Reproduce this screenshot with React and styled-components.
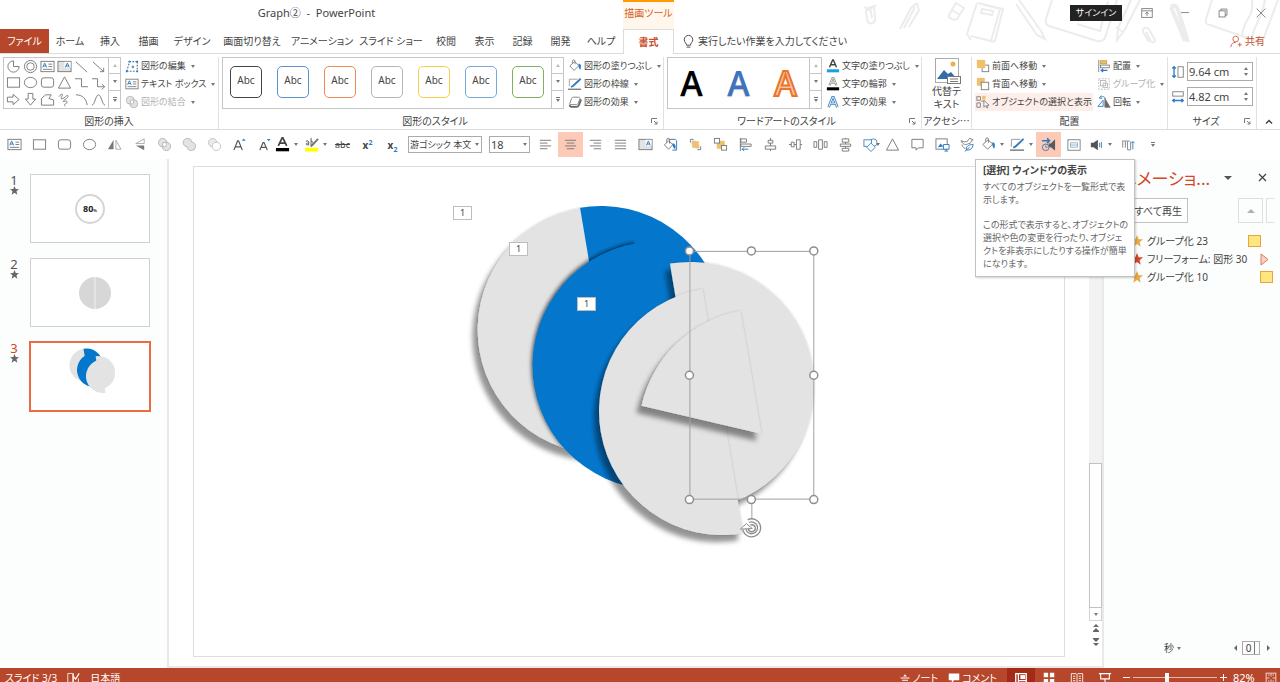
import styled, { createGlobalStyle, css } from "styled-components";

const GlobalStyle = createGlobalStyle`
    *, *::before, *::after {
        box-sizing: border-box;
    }
    body {
        margin: 0;
        color: #444;
        background: #fff;
        font-family: "Noto Sans", "Noto Sans CJK JP", sans-serif;
        font-size: 10px;
        line-height: 16px;
        font-feature-settings: "palt";
    }
    button, input, select {
        margin: 0;
        padding: 0;
        color: inherit;
        font: inherit;
        font-feature-settings: inherit;
        background: none;
        border: 0;
        border-radius: 0;
    }
`;

const gray = "#7a7a7a";
const blue = "#2f7bbf";
const amber = "#f0c06a";

const icons = {
    pie: <path d="M8 2a6 6 0 1 0 6 6H8z" />,
    donut: <><circle cx="8" cy="8" r="6.5" /><circle cx="8" cy="8" r="4" /></>,
    textBox: <><rect x="1" y="2.5" width="14" height="11" /><path d="M9 5.5h4M9 8h4M3 11h10" /><path stroke={blue} d="M3 9l1.8-4.5h.4L7 9M3.6 7.5h3" /></>,
    textBoxV: <><rect x="1" y="2.5" width="14" height="11" fill="#e3e3e3" /><rect x="8" y="3" width="6.5" height="6.500" fill="#fff" stroke="none" /><path stroke={blue} d="M9 9l1.800-4.500h.4L13 9M9.500 7.500h3" /></>,
    line: <path d="M2 3l12 11" />,
    arrow: <path d="M2 3l11.500 10.500M13.500 9.500v4h-4" />,
    rect: <rect x="1.500" y="3" width="13" height="10" />,
    oval: <ellipse cx="8" cy="8" rx="6.500" ry="5.500" />,
    round: <rect x="1.500" y="3" width="13" height="10" rx="2.500" />,
    triangle: <path d="M8 2L14.500 14h-13z" />,
    elbow: <path d="M1 4h7v8.500h7" />,
    elbowArrow: <path d="M1 4h6v8.500h7.500M11.500 9.500l3 3-3 3" />,
    arrowRight: <path d="M1.500 5.500h6V2.500L14 8l-6.500 5.500v-3h-6z" />,
    arrowDown: <path d="M5.500 1.500v6h-3L8 14l5.500-6.500h-3v-6z" />,
    freeform: <path d="M1.500 14V7L6 3h6L9.500 7l5 1.500V14z" />,
    scribble: <path d="M2 5c3-4 5-3 3 0s1 3 4 0 4 0 1 2-5 4-2 3 4 1 2 2-3 2-1 3" />,
    arc: <path d="M2 3c7 0 11 4 12 11" />,
    curve: <path d="M1 14c3 0 4-11 7-11s4 11 7 11" />,
    editShape: <><path stroke={blue} strokeDasharray="2 1.500" d="M5 3h9M14 3v11M2 14L5 4M2 14h12" strokeWidth="1.300" /><path stroke={blue} strokeWidth="2" d="M1 14h2M13 14h2M4 3h2M13 3h2" /><circle cx="9" cy="9" r="1" fill={gray} /></>,
    merge: <g fill="#e3e3e3" stroke="#b5b5b5"><circle cx="6" cy="6" r="4.500" /><circle cx="10" cy="10" r="4.500" /><ellipse cx="8" cy="8" rx="2" ry="2.500" fill="#fff" /></g>,
    union: <path fill="#e3e3e3" stroke="#b5b5b5" d="M6 1.500a4.500 4.500 0 0 1 4.500 4 4.500 4.500 0 1 1-5 5A4.500 4.500 0 0 1 6 1.500z" />,
    subtract: <g stroke="#c4c4c4"><circle cx="6" cy="6" r="4.500" fill="#eaeaea" /><circle cx="10" cy="10" r="4.500" fill="#fff" /></g>,
    bucket: <><path d="M2 8l5.500-5 5 4.500L7 13z" /><path d="M5 5V2.500a1.500 1.500 0 0 1 3 0V6" /><path d="M12 5.500c3 0 3.500 3 2 7-1.500-1.500-2-3-2-7z" fill={blue} stroke="none" /></>,
    outline: <><path d="M11 2.500H1.500v8" stroke="#999" /><path d="M0 14h15" stroke="#777" strokeWidth="1.500" /><path d="M14.500 2L6 10l-2.500 1.500" stroke={blue} strokeWidth="2" /></>,
    effects: <><path d="M2 10l2-6c.5-1 1-1.500 2-1.500h6c1.500 0 2 1 1.500 2l-2 5c-.5 1-1 1.500-2 1.500H3c-1 0-1.500-.5-1-1z" fill="#fff" /><path d="M2 11c0 2 .5 2.500 2 2.500h6c1.500 0 2-.5 2.500-2L15 5" stroke="#666" strokeWidth="2" /></>,
    letterFill: <><path d="M4 9.500L7.600 1h.8L12 9.500M5.300 6.500h5.400" stroke="#444" strokeWidth="1.600" /><path d="M1 13.500h14" stroke="#18a0e0" strokeWidth="3.500" /></>,
    letterOutline: <><path d="M4 9.500L7.600 1h.8L12 9.500M5.300 6.500h5.400" stroke="#888" strokeWidth="2.400" /><path d="M4 9.500L7.600 1h.8L12 9.500M5.300 6.500h5.400" stroke="#fff" strokeWidth=".8" /><path d="M1 13.500h14" stroke="#000" strokeWidth="3.500" /></>,
    letterEffects: <><path d="M3 14L7.500 2.500h1L13 14M5 10h6" stroke="#3c83c4" strokeWidth="3" /><path d="M3 14L7.500 2.500h1L13 14M5 10h6" stroke="#fff" strokeWidth="1" /></>,
    forward: <><rect x="7" y="7" width="7.500" height="7.500" /><rect x="1" y="1" width="9.500" height="9.500" fill={amber} stroke="none" /></>,
    backward: <><rect x="1" y="1" width="9" height="9" fill={amber} stroke="none" /><rect x="6" y="6" width="8.500" height="8.500" fill="#fff" /></>,
    selection: <><rect x="1" y="2" width="4" height="4" /><rect x="7" y="1" width="4" height="4" fill={amber} stroke="none" /><path d="M1 9h4v5H1zM6 7h4" /><path d="M9 6v8l2-1.800L12.500 15l1-.5-1.300-2.700H15z" fill="#fff" /></>,
    align: <><path d="M2 1v14" /><rect x="4" y="2" width="7" height="3.500" fill={amber} stroke="#c99a45" /><rect x="4" y="7" width="10" height="3" /><path d="M4 13h8M7 11l-2 2 2 2" stroke={blue} strokeWidth="1.500" /></>,
    group: <g stroke="#b5b5b5"><rect x="2" y="2" width="12" height="12" strokeDasharray="2 1.500" /><rect x="4" y="4" width="6" height="6" /><rect x="7" y="7" width="5" height="5" /></g>,
    rotate: <><path d="M1 13L7 6v7zM4 2.500c3-1.500 5-.5 5.500 2M2.500 3.500l2.500-3M2.500 3.500l3.500.5" stroke={blue} /><path d="M9 4v10h6z" fill="#666" /></>,
    flipH: <><path d="M7 3v10H1z" fill={gray} stroke="none" /><path d="M9.500 3.500v9.500H15z" stroke="#aaa" /></>,
    flipV: <><path d="M13 7V2L4 7z" stroke="#aaa" /><path d="M13 9v5L4 9z" fill={gray} stroke="none" /></>,
    grow: <><path d="M2 14L6 4h1l4 10M3.500 10.500h6" stroke="#555" strokeWidth="1.300" /><path d="M10.500 4L12.500 1.500l2 2.500z" fill={blue} stroke="none" /></>,
    shrink: <><path d="M3 14l3.500-8h1L11 14M4.500 11h5" stroke="#555" strokeWidth="1.300" /><path d="M10.500 2l2 2.500 2-2.500z" fill={blue} stroke="none" /></>,
    fontColor: <><path d="M3.500 9.500L7.600 1h.8L12.500 9.500M5.300 6.500h5.400" stroke="#444" strokeWidth="1.800" /><path d="M1 13.500h14" stroke="#000" strokeWidth="3.500" /></>,
    marker: <><path d="M2 4.500c2-1 3 0 3 1v3H3c-1.500-1-.5-2.500 2-2M7.500 1v7.500c3 .5 3-4.500 0-4" stroke="#555" /><path d="M15 2L9 8.500l-2 1.500" stroke="#777" strokeWidth="2" /><path d="M1 13.500h14" stroke="#ff0" strokeWidth="4" /></>,
    left: <path d="M2 3.500h12M2 6.500h8M2 9.500h12M2 12.500h8" />,
    center: <path d="M2 3.500h12M4 6.500h8M2 9.500h12M4 12.500h8" />,
    right: <path d="M2 3.500h12M6 6.500h8M2 9.500h12M6 12.500h8" />,
    justify: <path d="M2 3.500h12M2 6.500h12M2 9.500h12M2 12.500h12" />,
    formatFill: <><path d="M6 2.500h7l1.500 1.500v10H10" stroke={blue} /><path d="M1.500 8.500L6 4l4.500 4L6 13z" fill="#fff" /><path d="M4 6V3a1.500 1.500 0 0 1 3 0v4" /><path d="M10 7c3 0 4 2 3 6-2-1-3-3-3-6z" fill={blue} stroke="none" /></>,
    front: <><path d="M6 2.500H2.500V6M10 13.500h3.500V10" /><path d="M4.500 8V4.500H8M11.500 8v3.500H8" stroke="#aaa" /><rect x="4.500" y="4.500" width="7" height="7" fill={amber} stroke="none" /></>,
    back: <><rect x="4" y="4" width="8.500" height="8.500" fill={amber} stroke="none" /><rect x="1.500" y="1.500" width="5.500" height="5" fill="#fff" /><rect x="9" y="9" width="5.500" height="5" fill="#fff" /></>,
    alignLeft: <><path d="M2.500 1v14" /><path d="M3 2h6v3.500H3zM3 7.500h11V10H3z" /><path d="M4 13h7M6.500 11l-2 2 2 2" stroke={blue} /></>,
    alignCenter: <><path d="M8 1v14" /><path d="M5.500 3.500h5v3h-5zM2.500 9.500h11v3.500h-11z" fill="#fff" /></>,
    alignMiddle: <><path d="M1 8h14" /><path d="M3.500 5.500h3v5h-3zM9 3h4v10H9z" fill="#fff" /></>,
    distribute: <><path d="M1 5h3v6H1zM6 3h4v10H6zM12 5h3v6h-3z" fill="#fff" /></>,
    stack: <><path d="M8 1v14" /><path d="M4.500 2h7v3.500h-7zM2.500 7.500h11V10h-11zM4.500 12h7v3h-7z" fill="#fff" /></>,
    shapes: <g stroke="#4a88c0"><circle cx="11" cy="6" r="4" fill="#fff" /><rect x="1" y="3" width="8" height="7" fill="#fff" /><path d="M8.500 6.500l4.500 4.500-4.500 4.500L4 11z" fill="#fff" /></g>,
    callout: <path d="M2 2.500h12v9H9L6.500 14v-2.500H2z" />,
    altImage: <><rect x="1" y="2" width="12" height="11" /><path d="M3 11l3-4 3 3" fill={blue} stroke="none" /><path d="M9 8h6v5H9zM12 13v2M10 15h4" stroke={blue} fill="#fff" /></>,
    leaf: <><path d="M1 4c2 4 5 5 8 3 3 0 3-2 3-3l2-1-2-1c-2-1-3 0-3.500 2C6 6 4 5 1 4zM2 8c1 3 2 4 4 4" /><path d="M7 14c-1-4 2-6 7-6-.5 4-3 6.500-7 6zM5 15.500l5-4.500" stroke={blue} /></>,
    trigger: <><path d="M1 4h8M6.500 1.500L9 4 6.500 6.500" stroke={blue} strokeWidth="1.800" /><circle cx="5" cy="11" r="3.500" stroke={blue} /><path d="M5 9v2h2" /><path d="M8 7h2.500L15 2.500v12L10.500 11H9z" fill="#5a5a5a" stroke="none" /></>,
    pane: <><rect x="1" y="2" width="14" height="12" /><path d="M4 5.500h8v5H4zM4 8h8" stroke="#88abc9" /></>,
    sound: <><path d="M1 5.500h3L9 2v12l-5-3.500H1z" fill="#555" stroke="none" /><path d="M11 5.500v5M13 4.500v7" stroke={blue} /></>,
    columns: <><path d="M1 3.500h9M2 4v7M5 4v7M7.500 4v9.500H11V4" /><path d="M13.500 13V4M11.500 6l2-2 2 2" stroke={blue} /></>,
    bulb: <path d="M6 12c0-2-2.500-3-2.500-6a4.500 4.500 0 0 1 9 0c0 3-2.500 4-2.500 6zM6 14h4" stroke="#444" />,
    share: <g stroke="#c8512f"><circle cx="7" cy="5" r="3.500" /><path d="M1 15c.5-4 2.500-6 6-6M12 9.500v5M9.500 12h5" /></g>,
    heightSize: <><path d="M3.500 2v12M1.500 4l2-2 2 2M1.500 12l2 2 2-2" stroke={blue} strokeWidth="1.500" /><rect x="8" y="2" width="6" height="12" /></>,
    widthSize: <><rect x="2" y="2" width="12" height="5" /><path d="M2 12h12M4 10l-2 2 2 2M12 10l2 2-2 2" stroke={blue} strokeWidth="1.500" /></>,
    ribbonOptions: <><rect x="2" y="3" width="12" height="10" /><path d="M2 5.500h12M8 11.500V7M6 9l2-2 2 2" /></>,
    minimize: <path d="M3.500 7.500h9" />,
    restore: <><rect x="3.500" y="5.500" width="7" height="7" /><path d="M5.500 5.500v-2h7v7h-2" /></>,
    close: <path d="M3 3l10 10M13 3L3 13" />,
    spell: <g stroke="#fff"><path d="M1 3h6v11H1zM8 3v11M9 14h5V9" /><path d="M8 7l2.500 3L15 3" strokeWidth="1.500" /></g>,
    notes: <g stroke="#fff" strokeWidth="1.500"><path d="M2 8h12M4 11h8M2 14h12" /><path d="M5.500 6L8 3l2.500 3z" fill="#fff" strokeWidth="0" /></g>,
    comment: <path d="M1 2h14v9H8l-3 4v-4H1z" fill="#fff" stroke="none" />,
    normalView: <g stroke="#fff" strokeWidth="1.500"><rect x="2" y="3" width="12" height="11" /><path d="M5 3v11M5 11h9" /><rect x="8" y="5.500" width="4" height="3" fill="#fff" /></g>,
    sorter: <path d="M2 2h5v5H2zM9 2h5v5H9zM2 9h5v5H2zM9 9h5v5H9z" fill="#fff" stroke="none" />,
    reading: <g stroke="#fff"><path d="M1.500 3H7l1 1 1-1h5.500v10H9l-1 1-1-1H1.500zM8 4v10M3.500 6H6M3.500 8.500H6M3.500 11H6M10 6h2.500M10 8.500h2.500M10 11h2.500" /></g>,
    slideShow: <g stroke="#fff" strokeWidth="1.300"><path d="M1 3h14M3 3v6h10V3M8 9v4M5 14h6" /></g>,
    fit: <g stroke="#fff"><rect x="1.500" y="1.500" width="13" height="13" /><path d="M8 2v4M8 14v-4M2 8h4M14 8h-4M4 4h2M10 4h2M4 12h2M10 12h2" /></g>,
};

const Svg = styled.svg`
    display: block;
    flex: none;
    width: ${({ $size }) => $size}px;
    height: ${({ $size }) => $size}px;
    fill: none;
    stroke: ${gray};
`;

const Icon = ({ name, size = 15 }) => (
    <Svg $size={size} viewBox="0 0 16 16" aria-hidden="true">{icons[name]}</Svg>
);

const Caret = styled.span`
    flex: none;
    width: 0;
    height: 0;
    border: 2px solid transparent;
    border-top: 3px solid #777;
    border-bottom: 0;
    ${({ $up }) => $up && css`transform: rotate(180deg);`}
`;

const menuTabs = ["ホーム", "挿入", "描画", "デザイン", "画面切り替え", "アニメーション", "スライド ショー", "校閲", "表示", "記録", "開発", "ヘルプ"];
const shapeNames = ["pie", "donut", "textBox", "textBoxV", "line", "arrow", "rect", "oval", "round", "triangle", "elbow", "elbowArrow", "arrowRight", "arrowDown", "freeform", "scribble", "arc", "curve"];
const styleColors = ["#444", "#5b93cf", "#ee8a52", "#b5b5b5", "#f8ce4a", "#75aadb", "#7fb15f"];
const quickShapes = ["textBox", "rect", "round", "oval", "flipH", "flipV", "merge", "union", "subtract", "grow", "shrink"];
const quickArrange = ["left", "center", "right", "justify", "textBoxV", "formatFill", "front", "back", "alignLeft", "alignCenter", "alignMiddle", "distribute", "stack", "shapes"];
const animations = [
    { label: "グループ化 23", star: "#e8a94a", offset: 0 },
    { label: "フリーフォーム: 図形 30", star: "#d2452a", offset: 12, triangle: true },
    { label: "グループ化 10", star: "#e8a94a", offset: 12 },
];

const GalleryArrows = () => (
    <Scroller>
        <ScrollButton aria-label="上へ" disabled><Caret $up /></ScrollButton>
        <ScrollButton aria-label="下へ"><Caret /></ScrollButton>
        <ScrollButton aria-label="その他"><More><Caret /></More></ScrollButton>
    </Scroller>
);

const Command = ({ icon, children, caret = true, ...props }) => (
    <CommandButton {...props}>
        <Icon name={icon} size={14} />
        <span>{children}</span>
        {caret && <Caret />}
    </CommandButton>
);

const Group = ({ title, launcher, width, children }) => (
    <RibbonGroup $width={width}>
        <GroupBody>{children}</GroupBody>
        <GroupFooter>
            <GroupTitle>{title}</GroupTitle>
            {launcher && (
                <Launcher aria-label={title}>
                    <Svg $size={7} viewBox="0 0 7 7"><path d="M.5 5V.5H6M3 3l3 3M6 3.500V6H3.500" /></Svg>
                </Launcher>
            )}
        </GroupFooter>
    </RibbonGroup>
);

const HeaderArt = () => (
    <Art viewBox="860 0 420 53" aria-hidden="true">
        <path d="M866 9l8-3 1 12c0 7-7 7-8 1l-1-7c0-4 5-4 5 0l1 6M864 7l5 3 7-5" />
        <path d="M917 3l2 7-10 17M917 3l-6 5-11 21M915 7l-11 21" />
        <path d="M956 3l8 5-7 11c-3 2-9-1-8-4zM952 10l8 5" />
        <path d="M978 3l25 6-8 32-4 1M977 3l-10 31 4 6M978 3l22 6-9 32-20-5M982 9l11 2-1 4-11-2z" />
        <path d="M1019 0l22 31 4 8-8-4-21-31" />
        <path d="M1052 0l-6 19c-1 4 0 6 3 7l48 15c4 1 6 0 8-3l12-38M1077 24l23 7 8-30" />
        <path d="M1140 0l-16 31-7 9 1-12L1131 0M1116 27l7 5" />
        <path d="M1143 32c-1-5 5-6 7-1l5 9c0 3-4 3-5 0l-4-8M1143 32l6 10" />
        <path d="M1171 7c3-3 6-1 7 3l10 32M1171 7l14 34M1176 24l5-2" strokeWidth="4" />
        <path d="M1212 0l-6 19c-1 4 1 6 4 6l46 16c4 1 7-1 8-4l14-37M1242 36c2-20 12-16 10-36M1252 38c2-14 9-16 13-38" />
    </Art>
);

// half of a disc with the cut tilted a little to the left
const half = (cx, cy, side) => {
    const sweep = side === "left" ? 0 : 1;
    return `M${cx - 20.5} ${cy - 122.3}A124 124 0 0 ${sweep} ${cx + 20.5} ${cy + 122.3}Z`;
};
const handles = [[690, 251], [752, 251], [814.5, 251], [690, 375.5], [814.5, 375.5], [690, 500], [752, 500], [814.5, 500]];

const SlideDrawing = () => (
    <Drawing viewBox="194 167 871 490" aria-hidden="true">
        <defs>
            <filter id="deep" x="-20%" y="-20%" width="140%" height="140%">
                <feDropShadow dx="0" dy="0" stdDeviation="1" floodOpacity=".22" />
                <feDropShadow dx="-5" dy="7" stdDeviation="2.5" floodOpacity=".42" />
            </filter>
            <filter id="soft" x="-20%" y="-20%" width="140%" height="140%">
                <feDropShadow dx="-1" dy="-1" stdDeviation="2" floodOpacity=".7" />
            </filter>
            <clipPath id="backDisc"><circle cx="602" cy="330" r="124" /></clipPath>
            <clipPath id="leftOfCut"><path d="M400 121H615L676 488H400Z" /></clipPath>
        </defs>
        <path d={half(602, 330, "left")} fill="#e3e3e3" filter="url(#deep)" />
        <path d={half(601, 330, "right")} fill="#0477cd" />
        <g clipPath="url(#backDisc)">
            <g clipPath="url(#leftOfCut)">
                <path d={half(657, 366, "left")} fill="#0477cd" filter="url(#soft)" />
            </g>
        </g>
        <path d={half(657, 366, "left")} fill="#0477cd" />
        <path d={half(691, 386, "right")} fill="#e3e3e3" filter="url(#deep)" />
        <path d={half(723.5, 411.5, "left")} fill="#e3e3e3" filter="url(#deep)" />
        <path d="M762 434L642 406A124 124 0 0 1 741 311Z" fill="#e3e3e3" filter="url(#deep)" />
        <g fill="none" stroke="#a0a0a0">
            <rect x="690.5" y="251.500" width="124" height="248" />
            <path d="M752.500 500v20" />
            <g fill="#fff" stroke="#8e8e8e" strokeWidth="1.500">
                {handles.map(([x, y]) => <circle key={x + "-" + y} cx={x} cy={y} r="4" />)}
            </g>
            <path d="M745 530a7.500 7.500 0 1 0 4-8.500" stroke="#8e8e8e" strokeWidth="4.500" />
            <path d="M745 530a7.500 7.500 0 1 0 4-8.500" stroke="#fff" strokeWidth="1.800" />
            <path d="M741 529.500l6-5.500 6 5z" stroke="#8e8e8e" fill="#fff" />
            <path d="M749 529a3.500 3.500 0 1 0 2-3.500" stroke="#8e8e8e" strokeWidth="1.500" />
        </g>
    </Drawing>
);

const Star = ({ color, size = 12 }) => (
    <Svg $size={size} viewBox="0 0 16 16"><path d="M8 0l2.200 5.500 5.800.3-4.500 3.700L13 15.500 8 12l-5 3.500 1.500-6L0 5.800l5.800-.3z" fill={color} stroke="none" /></Svg>
);

const Thumbnail = ({ number, active, children }) => (
    <ThumbRow>
        <ThumbNumber $active={active}>
            {number}
            <Star color="#666" size={9} />
        </ThumbNumber>
        <Thumb $active={active} aria-label={"スライド " + number}>{children}</Thumb>
    </ThumbRow>
);

const QuickAccess = () => (
    <QuickBar>
        <QuickGrid $count={11} $width={270}>
            {quickShapes.map(name => <QuickButton key={name} aria-label={name}><Icon name={name} /></QuickButton>)}
        </QuickGrid>
        <QuickButton $split aria-label="フォントの色"><Icon name="fontColor" /><Caret /></QuickButton>
        <QuickButton $split aria-label="蛍光ペン"><Icon name="marker" /><Caret /></QuickButton>
        <QuickGrid $count={3} $width={74}>
            <QuickButton><s>abc</s></QuickButton>
            <QuickButton><b>x<Sup>2</Sup></b></QuickButton>
            <QuickButton><b>x<Sub>2</Sub></b></QuickButton>
        </QuickGrid>
        <SelectWrap $width={74}>
            <Select aria-label="フォント" defaultValue="a"><option value="a">游ゴシック 本文</option></Select>
            <Caret />
        </SelectWrap>
        <SelectWrap $width={41}>
            <Select $large aria-label="フォント サイズ" defaultValue="18"><option>18</option></Select>
            <Caret />
        </SelectWrap>
        <QuickGrid $count={14} $width={343}>
            {quickArrange.map(name => (
                <QuickButton key={name} $active={name === "center"} aria-label={name}><Icon name={name} /></QuickButton>
            ))}
        </QuickGrid>
        <Caret />
        <QuickGrid $count={4} $width={98}>
            {["triangle", "callout", "altImage", "leaf"].map(name => <QuickButton key={name} aria-label={name}><Icon name={name} /></QuickButton>)}
        </QuickGrid>
        <QuickButton $split aria-label="図形の塗りつぶし"><Icon name="bucket" /><Caret /></QuickButton>
        <QuickButton $split aria-label="図形の枠線"><Icon name="outline" /><Caret /></QuickButton>
        <QuickButton $active aria-label="オブジェクトの選択と表示"><Icon name="trigger" /></QuickButton>
        <QuickButton aria-label="ウィンドウ"><Icon name="pane" size={14} /></QuickButton>
        <QuickButton $split aria-label="サウンド"><Icon name="sound" size={14} /><Caret /></QuickButton>
        <QuickButton aria-label="列"><Icon name="columns" size={14} /></QuickButton>
        <QuickButton aria-label="その他"><More><Caret /></More></QuickButton>
    </QuickBar>
);

const App = () => {
    return (
        <Window>
            <GlobalStyle />
            <Header>
                <HeaderArt />
                <TitleBar>
                    <Title>Graph② &nbsp;-&nbsp; PowerPoint</Title>
                    <ContextTitle>描画ツール</ContextTitle>
                    <SignIn>サインイン</SignIn>
                    {["ribbonOptions", "minimize", "restore", "close"].map(name => (
                        <WindowButton key={name} aria-label={name}><Icon name={name} size={14} /></WindowButton>
                    ))}
                </TitleBar>
                <TabBar>
                    <FileTab>ファイル</FileTab>
                    <Tabs>{menuTabs.map(tab => <Tab key={tab}>{tab}</Tab>)}</Tabs>
                    <ActiveTab>書式</ActiveTab>
                    <TellMe><Icon name="bulb" />実行したい作業を入力してください</TellMe>
                    <Share><Icon name="share" size={13} />共有</Share>
                </TabBar>
            </Header>

            <Ribbon>
                <Group title="図形の挿入" width={219}>
                    <Gallery>
                        <ShapeGrid>
                            {shapeNames.map(name => <ShapeButton key={name} aria-label={name}><Icon name={name} /></ShapeButton>)}
                        </ShapeGrid>
                        <GalleryArrows />
                    </Gallery>
                    <Commands>
                        <Command icon="editShape">図形の編集</Command>
                        <Command icon="textBox">テキスト ボックス</Command>
                        <Command icon="merge" disabled>図形の結合</Command>
                    </Commands>
                </Group>
                <Group title="図形のスタイル" width={445} launcher>
                    <Gallery>
                        <StyleList>
                            {styleColors.map(color => <StyleButton key={color} $color={color}>Abc</StyleButton>)}
                        </StyleList>
                        <GalleryArrows />
                    </Gallery>
                    <Commands>
                        <Command icon="bucket">図形の塗りつぶし</Command>
                        <Command icon="outline">図形の枠線</Command>
                        <Command icon="effects">図形の効果</Command>
                    </Commands>
                </Group>
                <Group title="ワードアートのスタイル" width={258} launcher>
                    <Gallery>
                        <WordArtList>
                            <WordArt $color="#000">A</WordArt>
                            <WordArt $color="#3f72c0">A</WordArt>
                            <WordArt $color="#f8c3a3" $edge="#ed7428">A</WordArt>
                        </WordArtList>
                        <GalleryArrows />
                    </Gallery>
                    <Commands>
                        <Command icon="letterFill">文字の塗りつぶし</Command>
                        <Command icon="letterOutline">文字の輪郭</Command>
                        <Command icon="letterEffects">文字の効果</Command>
                    </Commands>
                </Group>
                <Group title="アクセシ…" width={50}>
                    <AltButton>
                        <Svg $size={28} viewBox="0 0 28 28">
                            <rect x="2.500" y="1.500" width="23" height="24" fill="#fff" stroke="#aaa" />
                            <circle cx="20" cy="7" r="2.500" fill="#eeb04c" stroke="none" />
                            <path d="M4 22l7-9 4 4 3-2 6 7z" fill="#2f6eaa" stroke="none" />
                            <rect x="14.500" y="19.500" width="13" height="7" fill="#fff" />
                            <path d="M17 22h8M17 24.500h8" />
                        </Svg>
                        代替テ<br />キスト
                    </AltButton>
                </Group>
                <Group title="配置" width={196}>
                    <Commands>
                        <Command icon="forward">前面へ移動</Command>
                        <Command icon="backward">背面へ移動</Command>
                        <Command icon="selection" caret={false} $highlight>オブジェクトの選択と表示</Command>
                    </Commands>
                    <Commands>
                        <Command icon="align">配置</Command>
                        <Command icon="group" disabled>グループ化</Command>
                        <Command icon="rotate">回転</Command>
                    </Commands>
                </Group>
                <Group title="サイズ" width={89} launcher>
                    <SizeFields>
                        <SizeField>
                            <Icon name="heightSize" size={14} />
                            <SizeBox>
                                <SizeInput aria-label="高さ" defaultValue="9.64 cm" />
                                <Spinner><Caret $up /><Caret /></Spinner>
                            </SizeBox>
                        </SizeField>
                        <SizeField>
                            <Icon name="widthSize" size={14} />
                            <SizeBox>
                                <SizeInput aria-label="幅" defaultValue="4.82 cm" />
                                <Spinner><Caret $up /><Caret /></Spinner>
                            </SizeBox>
                        </SizeField>
                    </SizeFields>
                </Group>
                <Collapse aria-label="リボンを折りたたむ">
                    <Svg $size={8} viewBox="0 0 8 8"><path d="M1 5.500l3-3 3 3" stroke="#444" strokeWidth="1.500" /></Svg>
                </Collapse>
            </Ribbon>

            <QuickAccess />

            <Workspace>
                <ThumbPanel>
                    <Thumbnail number={1}>
                        <Ring>80<small>%</small></Ring>
                    </Thumbnail>
                    <Thumbnail number={2}>
                        <Svg $size={44} viewBox="0 0 44 44">
                            <circle cx="27" cy="22" r="16" fill="#d7d7d7" stroke="none" />
                            <path d="M27 6v32" stroke="#e8e8e8" strokeWidth="1.500" />
                        </Svg>
                    </Thumbnail>
                    <Thumbnail number={3} active>
                        <ThumbDrawing viewBox="193 166 872 491">
                            <path d={half(601, 330, "left")} fill="#e3e3e3" />
                            <path d={half(601, 330, "right")} fill="#0477cd" />
                            <path d={half(657, 366, "left")} fill="#0477cd" />
                            <path d={half(691, 386, "right")} fill="#e3e3e3" />
                            <path d={half(723, 411, "left")} fill="#e3e3e3" />
                        </ThumbDrawing>
                    </Thumbnail>
                </ThumbPanel>

                <Stage>
                    <Slide>
                        <SlideDrawing />
                        <Badge $x={259} $y={39}>1</Badge>
                        <Badge $x={315} $y={75}>1</Badge>
                        <Badge $x={383} $y={130}>1</Badge>
                    </Slide>
                </Stage>

                <ScrollBar>
                    <ScrollTrack />
                    <ScrollThumb />
                    <ScrollDown aria-label="下へスクロール"><Caret /></ScrollDown>
                    <PageButton aria-label="前のスライド">
                        <Svg $size={8} viewBox="0 0 8 8"><path d="M4 0l3 3H1zM4 4l3 3H1zM1 7h6v1H1z" fill="#666" stroke="none" /></Svg>
                    </PageButton>
                    <PageButton aria-label="次のスライド">
                        <Svg $size={8} viewBox="0 0 8 8"><path d="M4 8l3-3H1zM4 4l3-3H1zM1 0h6v1H1z" fill="#666" stroke="none" /></Svg>
                    </PageButton>
                </ScrollBar>

                <AnimationPane>
                    <PaneHeader>
                        <PaneTitle>アニメーショ...</PaneTitle>
                        <PaneButton aria-label="オプション"><BigCaret /></PaneButton>
                        <PaneButton aria-label="閉じる"><Svg $size={9} viewBox="0 0 9 9"><path d="M1 1l7 7M8 1L1 8" stroke="#444" strokeWidth="1.300" /></Svg></PaneButton>
                    </PaneHeader>
                    <PaneTools>
                        <PlayButton>すべて再生</PlayButton>
                        <MoveButton aria-label="前に移動"><BigCaret $up /></MoveButton>
                        <MoveButton $cut aria-label="後に移動" />
                    </PaneTools>
                    <AnimationList>
                        {animations.map(item => (
                            <AnimationItem key={item.label}>
                                <Star color={item.star} />
                                <AnimationLabel>{item.label}</AnimationLabel>
                                <TimeSlot $offset={item.offset}>
                                    {item.triangle
                                        ? <Svg $size={13} viewBox="0 0 13 13"><path d="M1 1l7 5.500L1 12z" fill="#fbd3c6" stroke="#e0765a" /></Svg>
                                        : <TimeBar />}
                                </TimeSlot>
                            </AnimationItem>
                        ))}
                    </AnimationList>
                    <PaneFooter>
                        <Seconds>秒<Caret /></Seconds>
                        <Side $left />
                        <Position><span>0</span></Position>
                        <Side />
                    </PaneFooter>
                </AnimationPane>

                <Tooltip role="tooltip">
                    <strong>[選択] ウィンドウの表示</strong>
                    <p>すべてのオブジェクトを一覧形式で表<br />示します。</p>
                    <p>この形式で表示すると、オブジェクトの<br />選択や色の変更を行ったり、オブジェ<br />クトを非表示にしたりする操作が簡単<br />になります。</p>
                </Tooltip>
            </Workspace>

            <StatusBar>
                <StatusText>スライド 3/3</StatusText>
                <Icon name="spell" size={13} />
                <StatusText>日本語</StatusText>
                <StatusRight>
                    <StatusButton><Icon name="notes" size={12} />ノート</StatusButton>
                    <StatusButton><Icon name="comment" size={12} />コメント</StatusButton>
                    <Views>
                        <ViewButton $active aria-label="標準"><Icon name="normalView" size={14} /></ViewButton>
                        <ViewButton aria-label="スライド一覧"><Icon name="sorter" size={14} /></ViewButton>
                        <ViewButton aria-label="閲覧表示"><Icon name="reading" size={14} /></ViewButton>
                        <ViewButton aria-label="スライド ショー"><Icon name="slideShow" size={14} /></ViewButton>
                    </Views>
                    <ZoomSign $minus />
                    <ZoomSlider type="range" aria-label="ズーム" min="0" max="100" defaultValue="40" />
                    <ZoomSign />
                    <ZoomValue>82%</ZoomValue>
                    <Icon name="fit" size={12} />
                </StatusRight>
            </StatusBar>
        </Window>
    )
};

const Window = styled.div`
    display: flex;
    flex-direction: column;
    height: 100vh;
    overflow: hidden;
`;
const Header = styled.header`
    position: relative;
    flex: none;
    border-bottom: 1px solid #dcdcdc;
`;
const Art = styled.svg`
    position: absolute;
    top: 0;
    right: 0;
    width: 420px;
    height: 53px;
    fill: none;
    stroke: #ececec;
    stroke-width: 2;
`;
const TitleBar = styled.div`
    position: relative;
    display: flex;
    height: 29px;
`;
const Title = styled.div`
    width: 623px;
    padding: 5px 0 0 10px;
    font-size: 11px;
    text-align: center;
`;
const ContextTitle = styled.div`
    width: 51px;
    margin-right: auto;
    padding-top: 3px;
    color: #d4622a;
    text-align: center;
    white-space: nowrap;
    background: #fff7ec;
    border-top: 2px solid #ff9a00;
`;
const SignIn = styled.button`
    width: 52px;
    height: 16px;
    margin: 5px 6px 0 0;
    color: #fff;
    font-size: 9px;
    background: #222;
`;
const WindowButton = styled.button`
    display: grid;
    place-items: center;
    width: 38px;
    height: 26px;
`;
const TabBar = styled.nav`
    position: relative;
    display: flex;
    height: 24px;
`;
const Tab = styled.button`
    white-space: nowrap;
`;
const FileTab = styled(Tab)`
    width: 49px;
    color: #fff;
    background: #b7472a;
`;
const ActiveTab = styled(Tab)`
    width: 51px;
    height: 25px;
    color: #c8512f;
    font-weight: 700;
    background: #fff;
    border: 1px solid #dcdcdc;
    border-bottom: 0;
`;
const Tabs = styled.div`
    display: grid;
    grid-template-columns: 42px 38px 39px 48px 72px 68px 70px 40px 37px 39px 37px 44px;
`;
const TellMe = styled.button`
    display: flex;
    align-items: center;
    gap: 2px;
    margin: 0 auto 0 7px;
`;
const Share = styled.button`
    display: flex;
    align-items: center;
    gap: 2px;
    margin-right: 15px;
    color: #c8512f;
`;

const Ribbon = styled.section`
    display: flex;
    flex: none;
    height: 76px;
    border-bottom: 1px solid #dcdcdc;
`;
const RibbonGroup = styled.div`
    display: flex;
    flex-direction: column;
    width: ${({ $width }) => $width}px;
    margin-top: 3px;
    border-right: 1px solid #e1e1e1;
`;
const GroupBody = styled.div`
    display: flex;
    gap: 3px;
    height: 56px;
    padding: 0 3px;
`;
const GroupFooter = styled.div`
    display: flex;
    align-items: center;
    height: 16px;
`;
const GroupTitle = styled.div`
    flex: 1;
    font-family: "Noto Sans CJK JP", sans-serif;
    text-align: center;
    white-space: nowrap;
`;
const Launcher = styled.button`
    width: 12px;
`;
const Gallery = styled.div`
    display: flex;
    height: 52px;
    border: 1px solid #c6c6c6;
`;
const Scroller = styled.div`
    display: grid;
    width: 12px;
    border-left: 1px solid #c6c6c6;
`;
const ScrollButton = styled.button`
    display: grid;
    place-items: center;
    & + & {
        border-top: 1px solid #c6c6c6;
    }
    &:disabled {
        opacity: 0.5;
    }
`;
const More = styled.span`
    display: grid;
    padding-top: 1px;
    border-top: 1px solid #777;
`;
const ShapeGrid = styled.div`
    display: grid;
    grid-template-columns: repeat(6, 17px);
    padding: 0 1px;
`;
const ShapeButton = styled.button`
    display: grid;
    place-items: center;
`;
const StyleList = styled.div`
    display: flex;
    align-items: center;
    gap: 15px;
    padding: 0 7px 3px 7px;
`;
const StyleButton = styled.button`
    width: 32px;
    height: 32px;
    padding-bottom: 3px;
    background: #fff;
    border: 1px solid ${({ $color }) => $color};
    border-radius: 5px;
`;
const WordArtList = styled.div`
    display: flex;
    width: 141px;
`;
const WordArt = styled.button`
    flex: 1;
    color: ${({ $color }) => $color};
    font: 600 34px/46px "Open Sans", sans-serif;
    text-shadow: 0 1px 1px rgb(0 0 0 / 25%);
    ${({ $edge }) => $edge && css`
        -webkit-text-stroke: 2px ${$edge};
    `}
`;
const Commands = styled.div`
    display: flex;
    flex-direction: column;
    align-items: flex-start;
`;
const CommandButton = styled.button`
    display: flex;
    align-items: center;
    gap: 2px;
    height: 18px;
    padding: 0 1px;
    font-size: 9px;
    white-space: nowrap;
    background: ${({ $highlight }) => ($highlight ? "#fdeee9" : "none")};
    ${Caret} {
        margin-left: 3px;
    }
    &:disabled {
        color: #b1b1b1;
    }
`;
const AltButton = styled.button`
    display: flex;
    flex-direction: column;
    align-items: center;
    width: 43px;
    line-height: 13px;
`;
const SizeFields = styled.div`
    display: flex;
    flex-direction: column;
    gap: 6px;
    padding-top: 5px;
`;
const SizeField = styled.label`
    display: flex;
    align-items: center;
    gap: 2px;
`;
const SizeBox = styled.span`
    display: flex;
    width: 66px;
    height: 19px;
    background: #fff;
    border: 1px solid #ababab;
`;
const SizeInput = styled.input`
    flex: 1;
    min-width: 0;
    padding-left: 1px;
    font-size: 11px;
`;
const Spinner = styled.span`
    display: flex;
    flex-direction: column;
    align-items: center;
    justify-content: space-evenly;
    width: 13px;
`;
const Collapse = styled.button`
    display: flex;
    align-items: flex-end;
    margin: 0 auto;
    padding-bottom: 3px;
`;

const QuickBar = styled.div`
    display: flex;
    flex: none;
    align-items: center;
    height: 29px;
    padding-left: 2px;
`;
const QuickGrid = styled.div`
    display: grid;
    grid-template-columns: repeat(${({ $count }) => $count}, 1fr);
    width: ${({ $width }) => $width}px;
`;
const QuickButton = styled.button`
    display: flex;
    align-items: center;
    justify-content: center;
    gap: 4px;
    width: ${({ $split }) => ($split ? 29 : 25)}px;
    height: 25px;
    background: ${({ $active }) => ($active ? "#fdcab8" : "none")};
    s {
        font-size: 9px;
    }
`;
const Sup = styled.sup`
    color: ${blue};
    font-size: 7px;
    line-height: 0;
`;
const Sub = styled.sub`
    color: ${blue};
    font-size: 7px;
    line-height: 0;
`;
const SelectWrap = styled.span`
    display: flex;
    align-items: center;
    width: ${({ $width }) => $width}px;
    height: 17px;
    margin: 0 3px 0 4px;
    padding-right: 2px;
    border: 1px solid #ababab;
`;
const Select = styled.select`
    flex: 1;
    min-width: 0;
    height: 15px;
    padding-left: 1px;
    font-size: ${({ $large }) => ($large ? 11 : 9)}px;
    line-height: 15px;
    appearance: none;
`;

const Workspace = styled.main`
    position: relative;
    display: flex;
    flex: 1;
    min-height: 0;
`;
const ThumbPanel = styled.aside`
    width: 169px;
    padding-top: 15px;
    background: #fcfdfd;
    border-right: 2px solid #e9e9e9;
`;
const ThumbRow = styled.div`
    display: flex;
    height: 84px;
`;
const ThumbNumber = styled.div`
    display: flex;
    flex-direction: column;
    align-items: center;
    width: 30px;
    padding-right: 2px;
    color: ${({ $active }) => ($active ? "#d24726" : "#555")};
    font-size: 13px;
    line-height: 12px;
`;
const Thumb = styled.button`
    display: grid;
    place-items: center;
    width: 120px;
    height: 69px;
    background: #fff;
    border: 1px solid #d0d0d0;
    ${({ $active }) => $active && css`
        border-color: transparent;
        outline: 2px solid #ee6a43;
        outline-offset: -1px;
    `}
`;
const Ring = styled.span`
    width: 30px;
    height: 30px;
    color: #222;
    font-size: 9px;
    font-weight: 700;
    line-height: 26px;
    border: 2px solid #d5d5d5;
    border-radius: 50%;
    small {
        font-size: 4px;
    }
`;
const ThumbDrawing = styled.svg`
    width: 100%;
`;
const Stage = styled.section`
    flex: 1;
    min-width: 0;
    padding: 7px 24px 0 24px;
    border-bottom: 2px solid #e9e9e9;
`;
const Slide = styled.div`
    position: relative;
    background: #fff;
    border: 1px solid #dedede;
`;
const Drawing = styled.svg`
    display: block;
    width: 100%;
`;
const Badge = styled.span`
    position: absolute;
    left: ${({ $x }) => $x}px;
    top: ${({ $y }) => $y}px;
    width: 19px;
    height: 14px;
    font-size: 9px;
    line-height: 12px;
    text-align: center;
    background: #fff;
    border: 1px solid #bdbdbd;
`;
const ScrollBar = styled.div`
    display: flex;
    flex-direction: column;
    width: 13px;
    padding-bottom: 17px;
    background: #fff;
    border-bottom: 2px solid #e9e9e9;
`;
const ScrollTrack = styled.div`
    flex: 1;
    background: #f2f2f2;
`;
const ScrollThumb = styled.div`
    height: 145px;
    border: 1px solid #c2c2c2;
`;
const ScrollDown = styled.button`
    display: grid;
    place-items: center;
    height: 13px;
    border: 1px solid #d5d5d5;
    border-top: 0;
`;
const PageButton = styled.button`
    display: grid;
    place-items: center;
    height: 14px;
`;

const AnimationPane = styled.aside`
    display: flex;
    flex-direction: column;
    width: 178px;
    background: #fcfdfd;
    border-left: 2px solid #e9e9e9;
`;
const PaneHeader = styled.div`
    display: flex;
    height: 37px;
`;
const PaneTitle = styled.h2`
    width: 106px;
    margin: 0;
    color: #d24726;
    font-size: 17px;
    font-weight: 400;
    line-height: 40px;
    text-align: right;
    white-space: nowrap;
`;
const PaneButton = styled.button`
    display: grid;
    place-items: center;
    width: 35px;
`;
const BigCaret = styled.span`
    border: 4px solid transparent;
    border-top-color: #555;
    border-bottom: 0;
    ${({ $up }) => $up && css`
        border-top-color: #b0b0b0;
        transform: rotate(180deg);
    `}
`;
const PaneTools = styled.div`
    display: flex;
    gap: 3px;
    padding: 2px 6px 0 8px;
`;
const PlayButton = styled.button`
    width: 76px;
    height: 25px;
    margin-right: auto;
    padding-right: 5px;
    text-align: right;
    background: #fff;
    border: 1px solid #c2c2c2;
`;
const MoveButton = styled.button`
    display: grid;
    place-items: center;
    width: ${({ $cut }) => ($cut ? 8 : 25)}px;
    height: 25px;
    border: 1px solid #dedede;
    ${({ $cut }) => $cut && css`border-right: 0;`}
`;
const AnimationList = styled.ul`
    margin: 9px 0 0;
    padding: 0 0 0 27px;
    list-style: none;
`;
const AnimationItem = styled.li`
    display: flex;
    align-items: center;
    height: 18px;
`;
const AnimationLabel = styled.span`
    flex: none;
    width: 105px;
    padding-left: 4px;
    white-space: nowrap;
`;
const TimeSlot = styled.span`
    padding-left: ${({ $offset }) => $offset}px;
`;
const TimeBar = styled.span`
    display: block;
    width: 13px;
    height: 12px;
    background: #ffe680;
    border: 1px solid #e5a63f;
`;
const PaneFooter = styled.div`
    display: flex;
    align-items: center;
    margin-top: auto;
    padding: 0 10px 12px 60px;
`;
const Seconds = styled.button`
    display: flex;
    align-items: center;
    gap: 3px;
    margin-right: auto;
`;
const Side = styled.span`
    border: 3px solid transparent;
    ${({ $left }) => ($left
        ? css`border-right: 3px solid #666; border-left: 0;`
        : css`border-left: 3px solid #666; border-right: 0;`)}
`;
const Position = styled.span`
    width: 18px;
    margin: 0 7px 0 5px;
    line-height: 12px;
    border: 1px solid #ababab;
    span {
        display: block;
        width: 12px;
        text-align: center;
        border-right: 1px solid #777;
    }
`;
const Tooltip = styled.div`
    position: absolute;
    top: 0;
    right: 145px;
    width: 160px;
    padding: 4px 7px 6px;
    color: #666;
    font-size: 9px;
    line-height: 13px;
    white-space: nowrap;
    background: #fff;
    border: 1px solid #c2c2c2;
    box-shadow: 1px 1px 2px rgb(0 0 0 / 20%);
    strong {
        color: #444;
        font-size: 10px;
    }
    p {
        margin: 3px 0 0;
    }
    p + p {
        margin-top: 12px;
    }
`;

const StatusBar = styled.footer`
    display: flex;
    flex: none;
    align-items: center;
    gap: 10px;
    height: 14px;
    padding: 5px 3px 0 5px;
    overflow: hidden;
    color: #fff;
    background: #b7472a;
`;
const StatusText = styled.span`
    white-space: nowrap;
`;
const StatusRight = styled.div`
    display: flex;
    align-items: center;
    margin-left: auto;
`;
const StatusButton = styled.button`
    display: flex;
    align-items: center;
    gap: 2px;
    margin-right: 10px;
    white-space: nowrap;
`;
const Views = styled.div`
    display: flex;
    margin-right: 4px;
`;
const ViewButton = styled.button`
    display: grid;
    place-items: center;
    width: 28px;
    height: 20px;
    background: ${({ $active }) => ($active ? "#a32a17" : "none")};
`;
const ZoomSign = styled.span`
    width: 7px;
    height: 7px;
    background: linear-gradient(#fff, #fff) center / 7px 1px no-repeat
        ${({ $minus }) => !$minus && ", linear-gradient(#fff, #fff) center / 1px 7px no-repeat"};
`;
const ZoomSlider = styled.input`
    width: 84px;
    height: 10px;
    margin: 0 3px;
    appearance: none;
    background: linear-gradient(#e4b9ad, #e4b9ad) center / 100% 1px no-repeat;
    &::-webkit-slider-thumb {
        width: 4px;
        height: 10px;
        appearance: none;
        background: #fff;
    }
`;
const ZoomValue = styled.span`
    width: 38px;
    padding-left: 6px;
    font-size: 11px;
`;

export default App;
